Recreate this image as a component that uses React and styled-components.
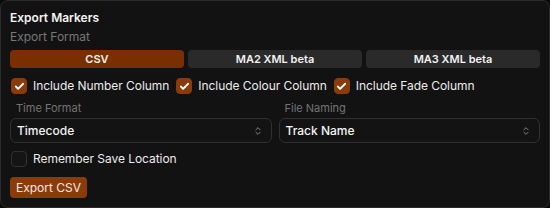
import React, { useState } from "react";
import styled, { createGlobalStyle } from "styled-components";
import { ChevronsUpDown, Check } from "lucide-react";

const GlobalStyle = createGlobalStyle`
  body {
    margin: 0;
    background: #0b0b0b;
    font-family: Inter, "Noto Sans", sans-serif;
  }
`;

const Panel = styled.div`
  width: 550px;
  height: 208px;
  box-sizing: border-box;
  border: 1px solid #2b2b2b;
  border-radius: 8px;
  background: #121212;
  padding: 8px 9px 9px 9px;
  display: flex;
  flex-direction: column;
`;

const Title = styled.div`
  font-size: 12px;
  font-weight: 600;
  line-height: 18px;
  color: #f4f4f4;
`;

const SectionLabel = styled.div`
  font-size: 12px;
  line-height: 18px;
  margin-top: 1px;
  color: #787878;
`;

const Segments = styled.div`
  display: grid;
  grid-template-columns: repeat(3, 1fr);
  gap: 4px;
  margin-top: 4px;
`;

const Segment = styled.button`
  height: 18px;
  border: none;
  border-radius: 4px;
  padding: 0;
  font-family: inherit;
  font-size: 11px;
  font-weight: 600;
  color: #f2f2f2;
  background: ${(p) => (p.$active ? "#7a2f02" : "#2a2a2a")};
  cursor: pointer;
`;

const CheckRow = styled.div`
  display: flex;
  align-items: center;
  gap: 6px;
  margin-top: ${(p) => p.$mt}px;
`;

const CheckItem = styled.label`
  display: flex;
  align-items: center;
  gap: 6px;
  font-size: 12px;
  letter-spacing: -0.05px;
  line-height: 16px;
  color: #ececec;
  cursor: pointer;
`;

const Box = styled.span`
  width: 16px;
  height: 16px;
  margin-left: 1px;
  box-sizing: border-box;
  border-radius: 4px;
  display: flex;
  align-items: center;
  justify-content: center;
  background: ${(p) => (p.$checked ? "#8a3a0b" : "#151515")};
  border: 1px solid ${(p) => (p.$checked ? "#8a3a0b" : "#303030")};
  color: #fff;
`;

const Fields = styled.div`
  display: grid;
  grid-template-columns: 1fr 1fr;
  column-gap: 7px;
  margin-top: 7px;
`;

const Field = styled.div`
  display: flex;
  flex-direction: column;
`;

const FieldLabel = styled.div`
  font-size: 11px;
  line-height: 14px;
  padding-left: 6px;
  color: #747474;
`;

const Select = styled.div`
  margin-top: 3px;
  height: 25px;
  box-sizing: border-box;
  border: 1px solid #303030;
  border-radius: 6px;
  background: #131313;
  display: flex;
  align-items: center;
  justify-content: space-between;
  padding: 0 8px 0 6px;
  font-size: 12px;
  font-weight: 500;
  color: #f4f4f4;
  svg {
    color: #9a9a9a;
  }
`;

const ExportButton = styled.button`
  margin-top: 10px;
  align-self: flex-start;
  height: 22px;
  padding: 0 6px;
  border: none;
  border-radius: 4px;
  background: #8b3a0c;
  color: #f3e9e3;
  font-family: inherit;
  font-size: 12px;
  cursor: pointer;
`;

const Checkbox = ({ label, checked, onToggle }) => (
  <CheckItem onClick={onToggle}>
    <Box $checked={checked}>{checked && <Check size={11} strokeWidth={4} />}</Box>
    {label}
  </CheckItem>
);

const formats = ["CSV", "MA2 XML beta", "MA3 XML beta"];

const App = () => {
  const [format, setFormat] = useState("CSV");
  const [cols, setCols] = useState({ number: true, colour: true, fade: true });
  const [remember, setRemember] = useState(false);
  const toggle = (k) => setCols({ ...cols, [k]: !cols[k] });

  return (
    <>
      <GlobalStyle />
      <Panel>
        <Title>Export Markers</Title>
        <SectionLabel>Export Format</SectionLabel>
        <Segments>
          {formats.map((f) => (
            <Segment key={f} $active={f === format} onClick={() => setFormat(f)}>
              {f}
            </Segment>
          ))}
        </Segments>
        <CheckRow $mt={10}>
          <Checkbox label="Include Number Column" checked={cols.number} onToggle={() => toggle("number")} />
          <Checkbox label="Include Colour Column" checked={cols.colour} onToggle={() => toggle("colour")} />
          <Checkbox label="Include Fade Column" checked={cols.fade} onToggle={() => toggle("fade")} />
        </CheckRow>
        <Fields>
          <Field>
            <FieldLabel>Time Format</FieldLabel>
            <Select>
              Timecode
              <ChevronsUpDown size={10} />
            </Select>
          </Field>
          <Field>
            <FieldLabel>File Naming</FieldLabel>
            <Select>
              Track Name
              <ChevronsUpDown size={10} />
            </Select>
          </Field>
        </Fields>
        <CheckRow $mt={8}>
          <Checkbox label="Remember Save Location" checked={remember} onToggle={() => setRemember(!remember)} />
        </CheckRow>
        <ExportButton>Export {format === "CSV" ? "CSV" : format.split(" ")[0]}</ExportButton>
      </Panel>
    </>
  );
};

export default App;
